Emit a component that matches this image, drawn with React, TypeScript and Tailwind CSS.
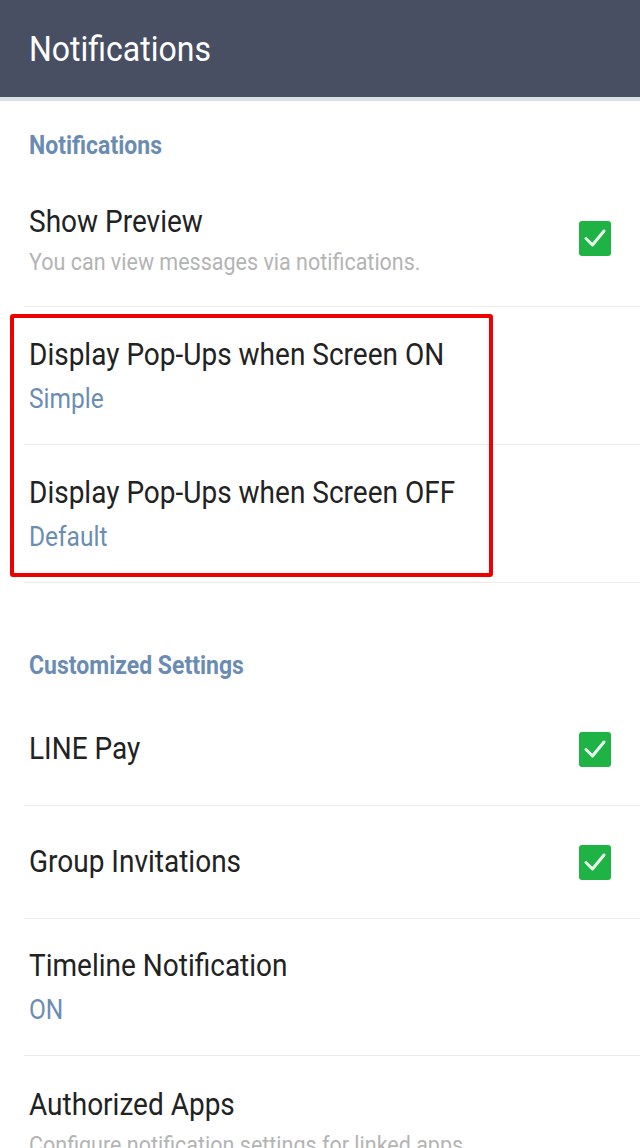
import React from "react";

function Check({ className = "" }: { className?: string }) {
  return (
    <div className={`w-[32px] h-[35px] rounded-[3px] bg-[#1fb244] flex items-center justify-center ${className}`}>
      <svg width="24" height="22" viewBox="0 0 24 22" fill="none">
        <path d="M3 11.5 L9.5 18 L21 4" stroke="#eafff0" strokeWidth="3" strokeLinecap="round" strokeLinejoin="round" />
      </svg>
    </div>
  );
}

function Divider() {
  return <div className="ml-[24px] h-px bg-[#ebebeb]" />;
}

function Row({
  title,
  sub,
  subBlue,
  check,
  h,
  checkClass,
}: {
  title: string;
  sub?: string;
  subBlue?: boolean;
  check?: boolean;
  h: string;
  checkClass?: string;
}) {
  return (
    <div className={`flex items-center pl-[29px] pr-[29px] ${h}`}>
      <div className="flex-1 flex flex-col items-start">
        <div className="text-[28px] leading-[34px] text-[#222] scale-y-[1.15]">{title}</div>
        {sub && (
          <div
            className={
              subBlue
                ? "text-[24.5px] leading-[30px] mt-[12px] text-[#6b8db3] scale-y-[1.12]"
                : "text-[21.5px] leading-[30px] mt-[8px] text-[#b4b4b4] scale-y-[1.15]"
            }
          >
            {sub}
          </div>
        )}
      </div>
      {check && <Check className={checkClass} />}
    </div>
  );
}

export default function App() {
  return (
    <div className="w-[640px] h-[1148px] overflow-hidden bg-white font-['Roboto',sans-serif]">
      <div className="h-[97px] bg-[#494f63] flex items-center pl-[29px]">
        <span className="text-white text-[32px] scale-y-[1.12] inline-block">Notifications</span>
      </div>
      <div className="h-[4px] bg-[#d9e0e6]" />
      <div className="pl-[29px] pt-[28px] h-[83px]">
        <div className="text-[23px] font-bold text-[#6a8cb2] scale-y-[1.12] origin-center inline-block">Notifications</div>
      </div>
      <Row title="Show Preview" sub="You can view messages via notifications." check h="h-[122px] pb-[8px]" checkClass="-translate-y-[3px]" />
      <Divider />
      <div className="relative">
        <div className="absolute left-[10px] top-[7px] w-[483px] h-[263px] border-[4px] border-[#ee0000] rounded-[3px] pointer-events-none" />
        <Row title="Display Pop-Ups when Screen ON" sub="Simple" subBlue h="h-[137px]" />
        <Divider />
        <Row title="Display Pop-Ups when Screen OFF" sub="Default" subBlue h="h-[137px]" />
        <Divider />
      </div>
      <div className="pl-[29px] pt-[66px] h-[118px]">
        <div className="text-[23px] font-bold text-[#6a8cb2] scale-y-[1.12] inline-block">Customized Settings</div>
      </div>
      <Row title="LINE Pay" check h="h-[104px] pb-[8px]" />
      <Divider />
      <Row title="Group Invitations" check h="h-[112px]" />
      <Divider />
      <Row title="Timeline Notification" sub="ON" subBlue h="h-[136px]" />
      <Divider />
      <Row title="Authorized Apps" sub="Configure notification settings for linked apps." h="h-[136px]" />
    </div>
  );
}
